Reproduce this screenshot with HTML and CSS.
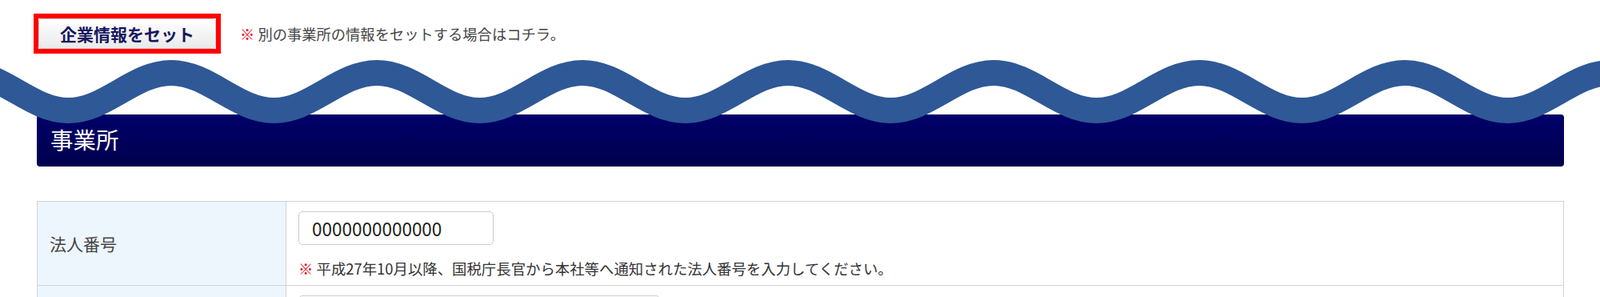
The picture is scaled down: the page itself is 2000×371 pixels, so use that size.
FILE: index.html
```html
<!DOCTYPE html>
<html lang="ja">
<head>
<meta charset="utf-8">
<title>事業所</title>
<link rel="stylesheet" href="styles.css">
</head>
<body>
<div class="page">
  <div class="toprow">
    <div class="annot"><button class="setbtn" type="button">企業情報をセット</button></div>
    <p class="topnote"><span class="kome">※</span> 別の事業所の情報をセットする場合はコチラ。</p>
  </div>

  <h2 class="secthead">事業所</h2>

  <table class="form">
    <tr>
      <th>法人番号</th>
      <td>
        <input class="field short" type="text" value="0000000000000">
        <p class="fnote"><span class="kome">※</span> 平成27年10月以降、国税庁長官から本社等へ通知された法人番号を入力してください。</p>
      </td>
    </tr>
    <tr>
      <th></th>
      <td><input class="field long" type="text" value=""></td>
    </tr>
  </table>
</div>

<svg class="wave" width="2000" height="200" viewBox="0 0 2000 200" aria-hidden="true">
  <path d="M -43 91 C 3.8 91 38.7 138 85.5 138 S 167.2 91 214 91 S 295.7 138 342.5 138 S 424.2 91 471 91 S 552.7 138 599.5 138 S 681.2 91 728 91 S 809.7 138 856.5 138 S 938.2 91 985 91 S 1066.7 138 1113.5 138 S 1195.2 91 1242 91 S 1323.7 138 1370.5 138 S 1452.2 91 1499 91 S 1580.7 138 1627.5 138 S 1709.2 91 1756 91 S 1837.7 138 1884.5 138 S 1966.2 91 2013 91 S 2094.7 138 2141.5 138" fill="none" stroke="#2f5896" stroke-width="32"/>
</svg>
</body>
</html>
```

FILE: styles.css
```css
html, body {
  margin: 0;
  padding: 0;
  background: #fff;
}
body {
  position: relative;
  font-family: "Noto Sans CJK JP", "Noto Sans", sans-serif;
  color: #333;
  overflow: hidden;
}
.page {
  padding: 17px 45px 0 46px;
}
.toprow {
  display: flex;
  align-items: center;
  margin-left: -4px;
  height: 50px;
}
.annot {
  border: 6px solid #f00;
  display: flex;
}
.setbtn {
  width: 222px;
  height: 38px;
  margin: 0;
  padding: 0;
  border: 1px solid #cfcfcf;
  border-radius: 4px;
  background: linear-gradient(#ffffff, #e9e9e9);
  font-family: "Noto Sans CJK JP", sans-serif;
  font-weight: 700;
  font-size: 21px;
  color: #171760;
  line-height: 36px;
}
.topnote {
  margin: 0 0 0 24px;
  font-size: 18.3px;
  line-height: 27px;
  color: #444;
}
.kome {
  color: #e60012;
  font-weight: 700;
}
.secthead {
  margin: 76px 0 0 0;
  height: 65px;
  display: flex;
  align-items: center;
  padding: 0 0 5px 17px;
  box-sizing: border-box;
  border-radius: 4px;
  background: linear-gradient(#000069, #00004e);
  color: #fff;
  font-weight: 400;
  font-size: 28.5px;
}
.form {
  margin-top: 43px;
  width: 100%;
  border-collapse: collapse;
}
.form th,
.form td {
  border: 1px solid #d3d3d3;
  vertical-align: middle;
}
.form th {
  width: 280px;
  padding: 0 15px;
  text-align: left;
  background: #edf5fd;
  font-weight: 400;
  font-size: 21px;
  color: #444;
}
.form td {
  padding: 12px 14px 7px 15px;
  background: #fff;
}
.field {
  display: block;
  box-sizing: border-box;
  height: 42px;
  margin: 0;
  padding: 0 16px;
  border: 1px solid #cccccc;
  border-radius: 5px;
  font-family: "Noto Sans CJK JP", sans-serif;
  font-size: 22.5px;
  color: #222;
  background: #fff;
}
.field.short { width: 244px; }
.field.long { width: 452px; }
.fnote {
  margin: 16px 0 0 0;
  font-size: 18.4px;
  line-height: 27px;
  color: #333;
}
.wave {
  position: absolute;
  left: 0;
  top: 0;
  pointer-events: none;
}
```
